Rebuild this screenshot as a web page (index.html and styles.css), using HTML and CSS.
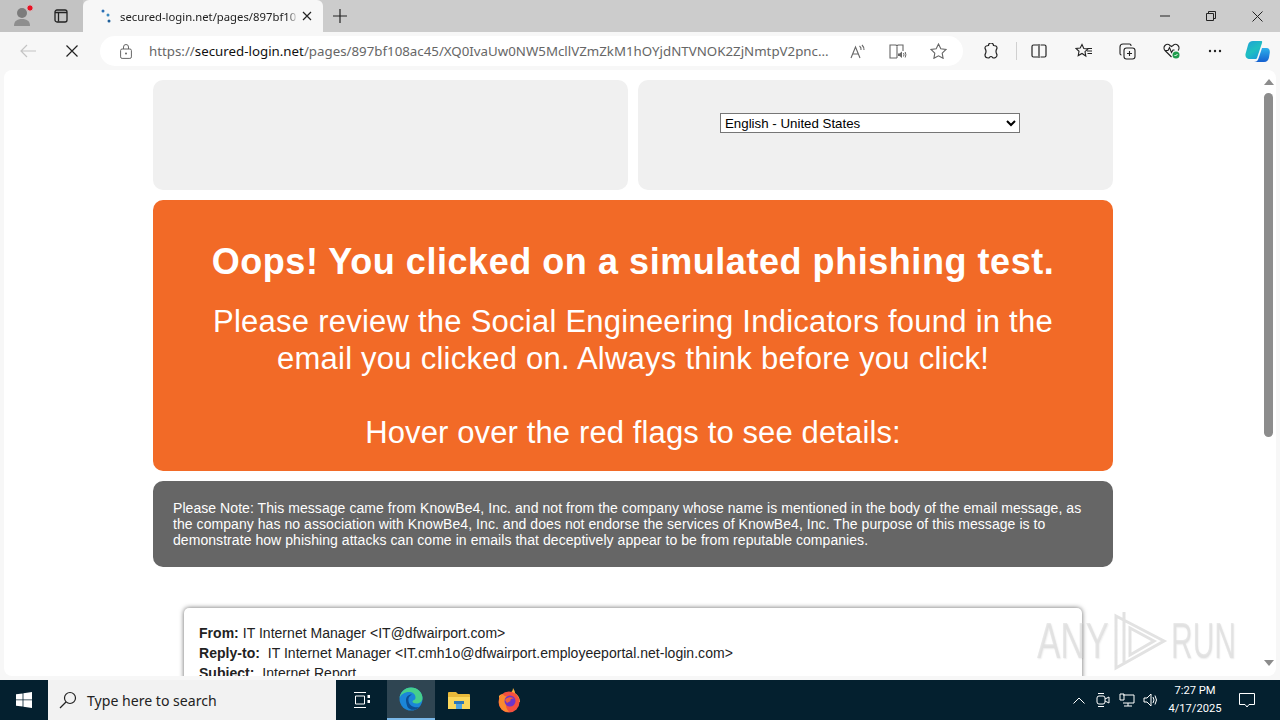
FILE: index.html
```html
<!DOCTYPE html>
<html>
<head>
    <meta charset="UTF-8" />
    <title>secured-login.net</title>
    <link rel="stylesheet" href="styles.css">
</head>
<body>
<div class="tabstrip">
    <div class="strip-left">
        <div class="profile">
            <svg width="24" height="26" viewBox="0 0 24 26"><circle cx="11" cy="12" r="5" fill="#7c7c7c"/><path d="M3 25c0-5 3-7 8-7s8 2 8 7z" fill="#8e8e8e"/><circle cx="19" cy="7" r="3.2" fill="#e81123" stroke="#cfcfcf"/></svg>
        </div>
        <svg class="tabs-icon" width="14" height="14" viewBox="0 0 14 14"><rect x="1" y="1" width="12" height="12" rx="2" fill="none" stroke="#222" stroke-width="1.3"/><path d="M1 3.5h12M4.500 3.500v9" stroke="#222" stroke-width="1.300" fill="none"/></svg>
    </div>
    <div class="tab">
        <svg class="spinner" width="12" height="14" viewBox="0 0 12 14"><circle cx="2" cy="2" r="1.500" fill="#2a6fb5"/><circle cx="7" cy="6" r="1.500" fill="#3a8ac0"/><circle cx="8" cy="12" r="1.500" fill="#1f5f9a"/></svg>
        <span class="tab-title">secured-login.net/pages/897bf10</span>
        <svg class="tab-close" width="10" height="10" viewBox="0 0 10 10"><path d="M1 1l8 8M9 1l-8 8" stroke="#222" stroke-width="1.200"/></svg>
    </div>
    <svg class="new-tab" width="14" height="14" viewBox="0 0 14 14"><path d="M7 0v14M0 7h14" stroke="#222" stroke-width="1.200"/></svg>
    <div class="win-controls">
        <svg width="10" height="10" viewBox="0 0 10 10"><path d="M0 5h10" stroke="#222"/></svg>
        <svg width="10" height="10" viewBox="0 0 10 10"><path d="M.5 2.500h7v7h-7zM2.500 2.500v-2h7v7h-2" fill="none" stroke="#222"/></svg>
        <svg width="11" height="11" viewBox="0 0 11 11"><path d="M.5.500l10 10M10.500.500l-10 10" stroke="#222"/></svg>
    </div>
</div>

<div class="toolbar">
    <svg class="nav-back" width="16" height="14" viewBox="0 0 16 14"><path d="M16 7H1M7 1L1 7l6 6" fill="none" stroke="#c4c4c4" stroke-width="1.200"/></svg>
    <svg class="nav-stop" width="12" height="12" viewBox="0 0 12 12"><path d="M.5.500l11 11M11.500.500l-11 11" stroke="#222" stroke-width="1.200"/></svg>
    <div class="addressbar">
        <svg class="lock" width="12" height="15" viewBox="0 0 12 15"><rect x=".6" y="5" width="10.800" height="9.400" rx="1.500" fill="none" stroke="#666"/><path d="M3.500 5V3a2.500 2.500 0 015 0v2" fill="none" stroke="#666"/><circle cx="6" cy="9.500" r="1" fill="#666"/></svg>
        <span class="url">https://<b>secured-login.net</b>/pages/897bf108ac45/XQ0IvaUw0NW5McllVZmZkM1hOYjdNTVNOK2ZjNmtpV2pnc...</span>
        <svg class="addr-icon" width="16" height="15" viewBox="0 0 16 15"><path d="M1 14L5.500 3 10 14M2.700 10h5.600M9.500 2q2 1.500 1.500 4M12 1q2.500 2.500 2 5" fill="none" stroke="#666" stroke-width="1.100"/></svg>
        <svg class="addr-icon" width="18" height="15" viewBox="0 0 18 15"><path d="M8 14H1V1h6l1 1 1-1h5v6M8 2v12" fill="none" stroke="#666" stroke-width="1.100"/><path d="M9 9.500h1.500L13 7.500v6.500l-2.500-2H9z" fill="#666"/><path d="M14.500 9q1 1.700 0 3.500M16.200 8q1.400 2.700 0 5.500" fill="none" stroke="#666"/></svg>
        <svg class="addr-icon" width="17" height="16" viewBox="0 0 17 16"><path d="M8.500 1l2.300 4.800 5.200.7-3.800 3.600.9 5.200-4.600-2.500-4.600 2.500.9-5.200L1 6.500l5.200-.7z" fill="none" stroke="#666" stroke-width="1.100"/></svg>
    </div>
    <div class="tools">
        <span class="tool"><svg width="16" height="17" viewBox="0 0 16 17"><path d="M5.500 2.500a2.500 2.500 0 015 0c2 0 3.500.5 3.500 2.500 0 1-1 1.500-1 3.500s1 2.500 1 3.500c0 2-2 3-3.500 3-1 0-1-1.500-2.500-1.500S6.500 15 5.500 15C3 15 2 13.500 2 12c0-1 1-1.500 1-3.500S2 6 2 5c0-1.500 1.500-2.500 3.500-2.500z" fill="none" stroke="#222" stroke-width="1.200"/></svg></span>
        <span class="tool-sep"></span>
        <span class="tool"><svg width="16" height="14" viewBox="0 0 16 14"><path d="M7 1H2.500A1.500 1.500 0 001 2.500v9A1.500 1.500 0 002.500 13H7M9.500 1h4A1.500 1.500 0 0115 2.500v9a1.500 1.500 0 01-1.500 1.500h-4M8 0v14" fill="none" stroke="#222" stroke-width="1.200"/></svg></span>
        <span class="tool"><svg width="17" height="16" viewBox="0 0 17 16"><path d="M7 1.500l1.800 4 4.200.4-3 2.800.8 4.300L7 10.500 3.200 12.600 4 8.300 1 5.500l4.200-.4zM12 8h5M12.500 10.500H17M12.500 5.500H17" fill="none" stroke="#222" stroke-width="1.100"/></svg></span>
        <span class="tool"><svg width="17" height="17" viewBox="0 0 17 17"><rect x="5" y="5" width="11" height="11" rx="2.500" fill="none" stroke="#222" stroke-width="1.100"/><path d="M10.500 8v5M8 10.500h5M12 3V2.500A1.500 1.500 0 0010.500 1H4a3 3 0 00-3 3v6.500A1.500 1.500 0 002.500 12" fill="none" stroke="#222" stroke-width="1.100"/></svg></span>
        <span class="tool"><svg width="17" height="16" viewBox="0 0 17 16"><path d="M8.500 14L2 7.500a3.500 3.500 0 015-5l1.500 1 1.500-1a3.500 3.500 0 015 5M1.500 7.500H5l1.500-3 2 5 1.500-2.500h1.500" fill="none" stroke="#222" stroke-width="1.100"/><circle cx="13" cy="12" r="3.500" fill="#1f9d4d"/><path d="M11.500 12l1 1 2-2" fill="none" stroke="#fff"/></svg></span>
        <span class="tool"><svg width="14" height="4" viewBox="0 0 14 4"><circle cx="2" cy="2" r="1.200" fill="#222"/><circle cx="7" cy="2" r="1.200" fill="#222"/><circle cx="12" cy="2" r="1.200" fill="#222"/></svg></span>
        <span class="tool copilot">
            <svg width="25" height="23" viewBox="0 0 25 23">
                <defs>
                    <linearGradient id="copA" x1="0" y1="0" x2="0.6" y2="1"><stop offset="0" stop-color="#1e9fd8"/><stop offset="0.6" stop-color="#1fc0c0"/><stop offset="1" stop-color="#18a0d8"/></linearGradient>
                    <linearGradient id="copB" x1="0.5" y1="0" x2="0.5" y2="1"><stop offset="0" stop-color="#2cb0ea"/><stop offset="1" stop-color="#1560d0"/></linearGradient>
                </defs>
                <path d="M8 1h8c1 0 1.500.500 1 2l-5 15c-.5 1-1 1-2 1H5c-3 0-5-2-4.500-5L3 5c.5-2.500 2.500-4 5-4z" fill="url(#copA)"/>
                <path d="M13 22h6c3 0 4.500-2 5-4.500l.8-5C25 10 24 8 21.500 8H17l-3.500 10.500C13 21 11 22 9 22z" fill="url(#copB)"/>
            </svg>
        </span>
    </div>
</div>

<div class="viewport">
    <div class="page">
        <div class="top-row">
            <div class="top-panel"></div>
            <div class="top-panel lang-panel">
                <select class="lang"><option>English - United States</option></select>
            </div>
        </div>
        <div class="banner">
            <h1>Oops! You clicked on a simulated phishing test.</h1>
            <p>Please review the Social Engineering Indicators found in the<br>email you clicked on. Always think before you click!</p>
            <p class="hover-note">Hover over the red flags to see details:</p>
        </div>
        <div class="note">Please Note: This message came from KnowBe4, Inc. and not from the company whose name is mentioned in the body of the email message, as the company has no association with KnowBe4, Inc. and does not endorse the services of KnowBe4, Inc. The purpose of this message is to demonstrate how phishing attacks can come in emails that deceptively appear to be from reputable companies.</div>
        <div class="email">
            <div><b>From:</b> IT Internet Manager &lt;IT@dfwairport.com&gt;</div>
            <div><b>Reply-to:</b>&nbsp; IT Internet Manager &lt;IT.cmh1o@dfwairport.employeeportal.net-login.com&gt;</div>
            <div><b>Subject:</b>&nbsp; Internet Report</div>
        </div>
    </div>
    <div class="scrollbar">
        <span class="arrow-up"></span>
        <div class="track"><div class="thumb"></div></div>
        <span class="arrow-down"></span>
    </div>
    <div class="watermark">
        <span class="wm-text wm-any">ANY</span>
        <svg width="58" height="62" viewBox="0 0 58 62"><path d="M6 6l48 25L6 58zM14 2v52M20 18l24 13-24 14z" fill="none" stroke="#e2e2e2" stroke-width="3"/></svg>
        <span class="wm-text wm-run">RUN</span>
    </div>
</div>

<div class="taskbar">
    <div class="start">
        <svg width="16" height="16" viewBox="0 0 16 16"><path d="M0 2.300L6.600 1.400v6.100H0zM7.400 1.300L16 0v7.500H7.400zM0 8.300h6.600v6.300L0 13.700zM7.400 8.300H16V16l-8.600-1.300z" fill="#fff"/></svg>
    </div>
    <div class="search">
        <svg width="18" height="18" viewBox="0 0 18 18"><circle cx="11" cy="7" r="5.500" fill="none" stroke="#222" stroke-width="1.200"/><path d="M7 11l-6 6" stroke="#222" stroke-width="1.200"/></svg>
        <span>Type here to search</span>
    </div>
    <div class="task-item taskview">
        <svg width="16" height="16" viewBox="0 0 16 16"><path d="M0 .5h12M0 15.500h12M1.500 4h9v8h-9z" fill="none" stroke="#fff"/><path d="M13.500 3h2.500v3h-2.500zM13.500 8h2.500v3h-2.500z" fill="#fff"/></svg>
    </div>
    <div class="task-item active">
        <svg width="24" height="24" viewBox="0 0 24 24">
            <circle cx="12" cy="12" r="11.500" fill="#1b86d8"/>
            <path d="M.5 11C1.500 5 6 .5 12 .5c6.500 0 11.500 5 11.500 10.500 0 4-3.500 5.500-6 5.500-2.500 0-4-.8-4-2 0-1.500 3-1 3-4C16.500 7 13.500 5 10 5 5.500 5 2 7.500.5 11z" fill="#45cf8c"/>
            <path d="M7 13c0-3.500 3-6 6-5.500C10 9 9 11 9.500 14c.5 4 5 7.500 11 6-4 4-9.500 3.500-12 0C7.500 17 7 15 7 13z" fill="#0d4f93"/>
        </svg>
    </div>
    <div class="task-item">
        <svg width="24" height="20" viewBox="0 0 24 20"><path d="M1 3a1 1 0 011-1h7l2 2h11a1 1 0 011 1v14H1z" fill="#e8b93a"/><path d="M1 7h22v12H1z" fill="#fbd75b"/><path d="M7 11h10v3H7z" fill="#2f78b8"/><path d="M9 14h6v5H9z" fill="#4fa3e0"/></svg>
    </div>
    <div class="task-item firefox">
        <svg width="26" height="26" viewBox="0 0 26 26">
            <path d="M3 9c1-1 2-2 3-2-.5 1-.5 1.500 0 2 3-3 6-3 8-3 2-1 3-3 3-5 1 2 2 3 2 5 3 2 5 5 5 9L3 15z" fill="#fbb03b"/>
            <circle cx="13" cy="15" r="10.500" fill="#f4503f"/>
            <path d="M3 15C3 10 5 8 7 7c1 3 4 2 6 3-3 4-5 9 0 15-6 0-10-4-10-10z" fill="#fb8a2e"/>
            <circle cx="14" cy="14" r="5.500" fill="#6d35c9"/>
            <path d="M9 13c2-3 6-3.500 9-1.500-3-.5-4 1-3.500 2.500L11 16z" fill="#f2603a"/>
        </svg>
    </div>
    <div class="tray">
        <span class="tray-icon"><svg width="12" height="7" viewBox="0 0 12 7"><path d="M.5 6.500L6 1l5.500 5.500" fill="none" stroke="#fff"/></svg></span>
        <span class="tray-icon"><svg width="14" height="16" viewBox="0 0 14 16"><rect x="1" y="4" width="8" height="8" rx="2" fill="none" stroke="#fff"/><path d="M9 7l4-2v6l-4-2M2 1.500h6M2 14.500h6" fill="none" stroke="#fff"/></svg></span>
        <span class="tray-icon"><svg width="16" height="14" viewBox="0 0 16 14"><path d="M4 2h11v8H4M1 1h4v6H1zM9 10v3M5 13h8" fill="none" stroke="#fff"/></svg></span>
        <span class="tray-icon"><svg width="16" height="14" viewBox="0 0 16 14"><path d="M1 5h3l4-4v12l-4-4H1zM10 4q2 3 0 6M12 2.500q3 4.500 0 9" fill="none" stroke="#fff"/></svg></span>
        <div class="clock"><div>7:27 PM</div><div>4/17/2025</div></div>
        <span class="notif"><svg width="16" height="15" viewBox="0 0 16 15"><path d="M.5.500h15v11H10l-2 2.500-2-2.500H.5z" fill="none" stroke="#fff"/></svg></span>
    </div>
</div>
</body>
</html>
```

FILE: styles.css
```css
* {
    box-sizing : border-box;
    margin : 0;
    padding : 0;
}

html, body {
    height : 100%;
    overflow : hidden;
}

body {
    display : flex;
    flex-direction : column;
    font-family : "Liberation Sans", Arial, sans-serif;
    background-color : #f7f7f7;
}

/* browser chrome */
.tabstrip {
    display : flex;
    align-items : flex-end;
    height : 32px;
    background-color : #cccccc;
}

.strip-left {
    display : flex;
    align-items : center;
    gap : 19px;
    width : 83px;
    height : 32px;
    padding-left : 11px;
    background-color : #c3c3c3;
}

.tab {
    display : flex;
    align-items : center;
    width : 240px;
    height : 32px;
    padding : 0 11px 0 18px;
    background-color : #f7f7f7;
    border-radius : 6px 6px 0 0;
}

.tab-title {
    flex : 1;
    margin : 0 4px 0 7px;
    white-space : nowrap;
    font-family : "Noto Sans", sans-serif;
    font-size : 11.3px;
    color : #222;
    -webkit-mask-image : linear-gradient(to right, #000 94%, transparent);
    mask-image : linear-gradient(to right, #000 94%, transparent);
}

.new-tab {
    margin : 0 0 9px 10px;
}

.win-controls {
    display : flex;
    align-items : center;
    gap : 36px;
    height : 32px;
    margin-left : auto;
    padding-right : 17px;
}

.toolbar {
    display : flex;
    align-items : center;
    height : 38px;
    padding-left : 20px;
    background-color : #f7f7f7;
}

.nav-stop {
    margin-left : 30px;
}

.addressbar {
    display : flex;
    align-items : center;
    width : 863px;
    height : 30px;
    margin-left : 22px;
    padding : 0 16px 0 20px;
    background-color : #fff;
    border-radius : 15px;
}

.url {
    flex : 1;
    margin-left : 17px;
    white-space : nowrap;
    font-family : "Noto Sans", sans-serif;
    font-size : 13.3px;
    color : #666;
}

.url b {
    font-weight : normal;
    color : #111;
}

.addr-icon {
    margin-left : 23px;
}

.url + .addr-icon {
    margin-left : 12px;
}

.tools {
    display : flex;
    align-items : center;
    margin-left : 6px;
}

.tool {
    display : flex;
    align-items : center;
    justify-content : center;
    width : 44px;
    height : 30px;
}

.tool-sep {
    width : 1px;
    height : 18px;
    margin-left : 3px;
    background-color : #d0d0d0;
}

.tool.copilot {
    width : 40px;
}

/* page area */
.viewport {
    position : relative;
    display : flex;
    flex : 1;
    min-height : 0;
    margin : 0 4px 4px 4px;
    padding-right : 1px;
    background-color : #fff;
    border-radius : 8px;
    overflow : hidden;
}

.page {
    flex : 1;
    min-width : 0;
    padding : 10px 0 0 149px;
    overflow : hidden;
}

.top-row {
    display : flex;
    gap : 10px;
    width : 960px;
}

.top-panel {
    display : flex;
    justify-content : center;
    width : 475px;
    height : 110px;
    padding : 33px 11px 0 0;
    background-color : #f0f0f0;
    border-radius : 10px;
}

.lang {
    width : 300px;
    height : 20px;
    font-family : "Liberation Sans", Arial, sans-serif;
    font-size : 13.3px;
    background-color : #fff;
}

.banner {
    width : 960px;
    height : 271px;
    margin-top : 10px;
    padding-top : 40px;
    text-align : center;
    color : #fff;
    background-color : #f26a27;
    border-radius : 10px;
}

.banner h1 {
    font-size : 36px;
    line-height : 44px;
    letter-spacing : 0.55px;
}

.banner p {
    margin-top : 19px;
    font-size : 31px;
    line-height : 37px;
    letter-spacing : 0.24px;
}

.banner .hover-note {
    margin-top : 37px;
    letter-spacing : 0.12px;
}

.note {
    width : 960px;
    height : 86px;
    margin-top : 10px;
    padding : 19px 20px;
    font-size : 14px;
    line-height : 16px;
    letter-spacing : 0.06px;
    color : #fff;
    background-color : #666;
    border-radius : 10px;
}

.email {
    width : 898px;
    height : 120px;
    margin : 41px 0 0 31px;
    padding : 15px;
    font-size : 14px;
    line-height : 20px;
    letter-spacing : 0.03px;
    color : #222;
    background-color : #fff;
    border-radius : 5px;
    box-shadow : 0 0 5px rgba(0, 0, 0, 0.6);
}

.scrollbar {
    display : flex;
    flex-direction : column;
    align-items : center;
    width : 13px;
    padding-top : 9px;
}

.track {
    flex : 1;
    width : 9px;
    margin-top : 8px;
}

.thumb {
    width : 9px;
    height : 344px;
    background-color : #8c8c8c;
    border-radius : 5px;
}

.arrow-up {
    width : 0;
    height : 0;
    border-left : 5px solid transparent;
    border-right : 5px solid transparent;
    border-bottom : 6px solid #8c8c8c;
}

.arrow-down {
    width : 0;
    height : 0;
    margin-bottom : 10px;
    border-left : 5px solid transparent;
    border-right : 5px solid transparent;
    border-top : 6px solid #8c8c8c;
}

.watermark {
    position : absolute;
    left : 1033px;
    top : 540px;
    display : flex;
    align-items : center;
    gap : 3px;
    pointer-events : none;
}

.wm-text {
    width : 70px;
    font-size : 50px;
    line-height : 50px;
    white-space : nowrap;
    color : rgba(215, 215, 215, 0.55);
    text-shadow : 1px 1px 2px rgba(0, 0, 0, 0.08);
    transform-origin : left center;
}

.wm-any {
    transform : scaleX(0.7);
}

.wm-run {
    transform : scaleX(0.6);
}

/* windows taskbar */
.taskbar {
    display : flex;
    align-items : center;
    height : 40px;
    color : #fff;
    background-color : #04202f;
}

.start {
    display : flex;
    align-items : center;
    justify-content : center;
    width : 48px;
    height : 40px;
}

.search {
    display : flex;
    align-items : center;
    gap : 10px;
    width : 288px;
    height : 40px;
    padding-left : 11px;
    font-family : "Noto Sans", sans-serif;
    font-size : 14.1px;
    color : #222;
    background-color : #f2f2f2;
}

.task-item {
    display : flex;
    align-items : center;
    justify-content : center;
    width : 48px;
    height : 40px;
}

.task-item.taskview {
    width : 51px;
}

.task-item.firefox {
    margin-left : 2px;
}

.task-item.active {
    background-color : #2f4552;
    border-bottom : 2px solid #7ab8e8;
}

.tray {
    display : flex;
    align-items : center;
    margin-left : auto;
    padding-right : 13px;
}

.tray-icon {
    display : flex;
    align-items : center;
    justify-content : center;
    width : 24px;
}

.clock {
    width : 64px;
    font-family : Roboto, sans-serif;
    font-size : 11.2px;
    line-height : 18px;
    text-align : center;
}

.notif {
    display : flex;
    justify-content : center;
    width : 40px;
}
```
